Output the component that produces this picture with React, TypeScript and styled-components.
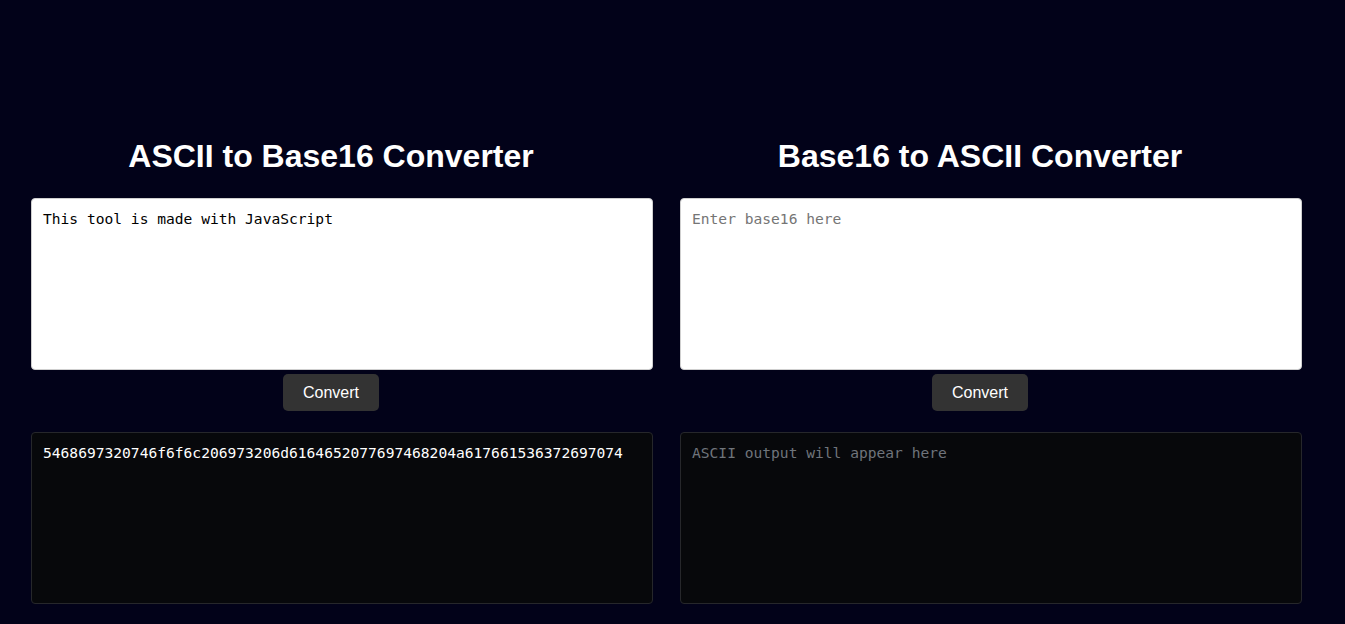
import React, { useState } from "react";
import styled, { createGlobalStyle } from "styled-components";

const GlobalStyle = createGlobalStyle`
  html, body {
    margin: 0;
    padding: 0;
    background: #020219;
  }
  body {
    font-family: "Liberation Sans", Arial, sans-serif;
  }
`;

const Page = styled.div`
  display: flex;
  gap: 49px;
  padding: 138px 0 0 31px;
  min-height: 624px;
  box-sizing: border-box;
  background: #020219;
`;

const Column = styled.section`
  width: 600px;
  display: flex;
  flex-direction: column;
  align-items: center;
`;

const Title = styled.h1`
  margin: 0 0 23px;
  font-family: "Liberation Sans", Arial, sans-serif;
  font-size: 32px;
  font-weight: bold;
  line-height: 37px;
  color: #ffffff;
  text-align: center;
`;

const Area = styled.textarea<{ $dark?: boolean }>`
  display: block;
  box-sizing: content-box;
  align-self: flex-start;
  width: 100%;
  height: 150px;
  padding: 11px 9px 9px 11px;
  margin: 0;
  border: 1px solid ${(p) => (p.$dark ? "#26272b" : "#cfcfcf")};
  border-radius: 4px;
  background: ${(p) => (p.$dark ? "#07080b" : "#ffffff")};
  color: ${(p) => (p.$dark ? "#ffffff" : "#000000")};
  font-family: "DejaVu Sans Mono", monospace;
  font-size: 14.6px;
  line-height: 17px;
  resize: none;
  outline: none;
  overflow: hidden;
  &::placeholder {
    color: ${(p) => (p.$dark ? "#6f747b" : "#757575")};
  }
`;

const Button = styled.button`
  margin: 4px 0 21px;
  width: 96px;
  height: 37px;
  border: none;
  border-radius: 5px;
  background: #333333;
  color: #ffffff;
  font-family: "Liberation Sans", Arial, sans-serif;
  font-size: 16px;
  cursor: pointer;
`;

const toHex = (s: string) =>
  Array.from(s)
    .map((c) => c.charCodeAt(0).toString(16).padStart(2, "0"))
    .join("");

const fromHex = (h: string) => {
  const clean = h.replace(/[^0-9a-fA-F]/g, "");
  let out = "";
  for (let i = 0; i + 1 < clean.length; i += 2) {
    out += String.fromCharCode(parseInt(clean.slice(i, i + 2), 16));
  }
  return out;
};

export default function App() {
  const [ascii, setAscii] = useState("This tool is made with JavaScript");
  const [hexOut, setHexOut] = useState(toHex("This tool is made with JavaScript"));
  const [hexIn, setHexIn] = useState("");
  const [asciiOut, setAsciiOut] = useState("");

  return (
    <>
      <GlobalStyle />
      <Page>
        <Column>
          <Title>ASCII to Base16 Converter</Title>
          <Area value={ascii} onChange={(e) => setAscii(e.target.value)} placeholder="Enter ASCII here" />
          <Button onClick={() => setHexOut(toHex(ascii))}>Convert</Button>
          <Area $dark readOnly value={hexOut} placeholder="Base16 output will appear here" />
        </Column>
        <Column>
          <Title>Base16 to ASCII Converter</Title>
          <Area value={hexIn} onChange={(e) => setHexIn(e.target.value)} placeholder="Enter base16 here" />
          <Button onClick={() => setAsciiOut(fromHex(hexIn))}>Convert</Button>
          <Area $dark readOnly value={asciiOut} placeholder="ASCII output will appear here" />
        </Column>
      </Page>
    </>
  );
}
